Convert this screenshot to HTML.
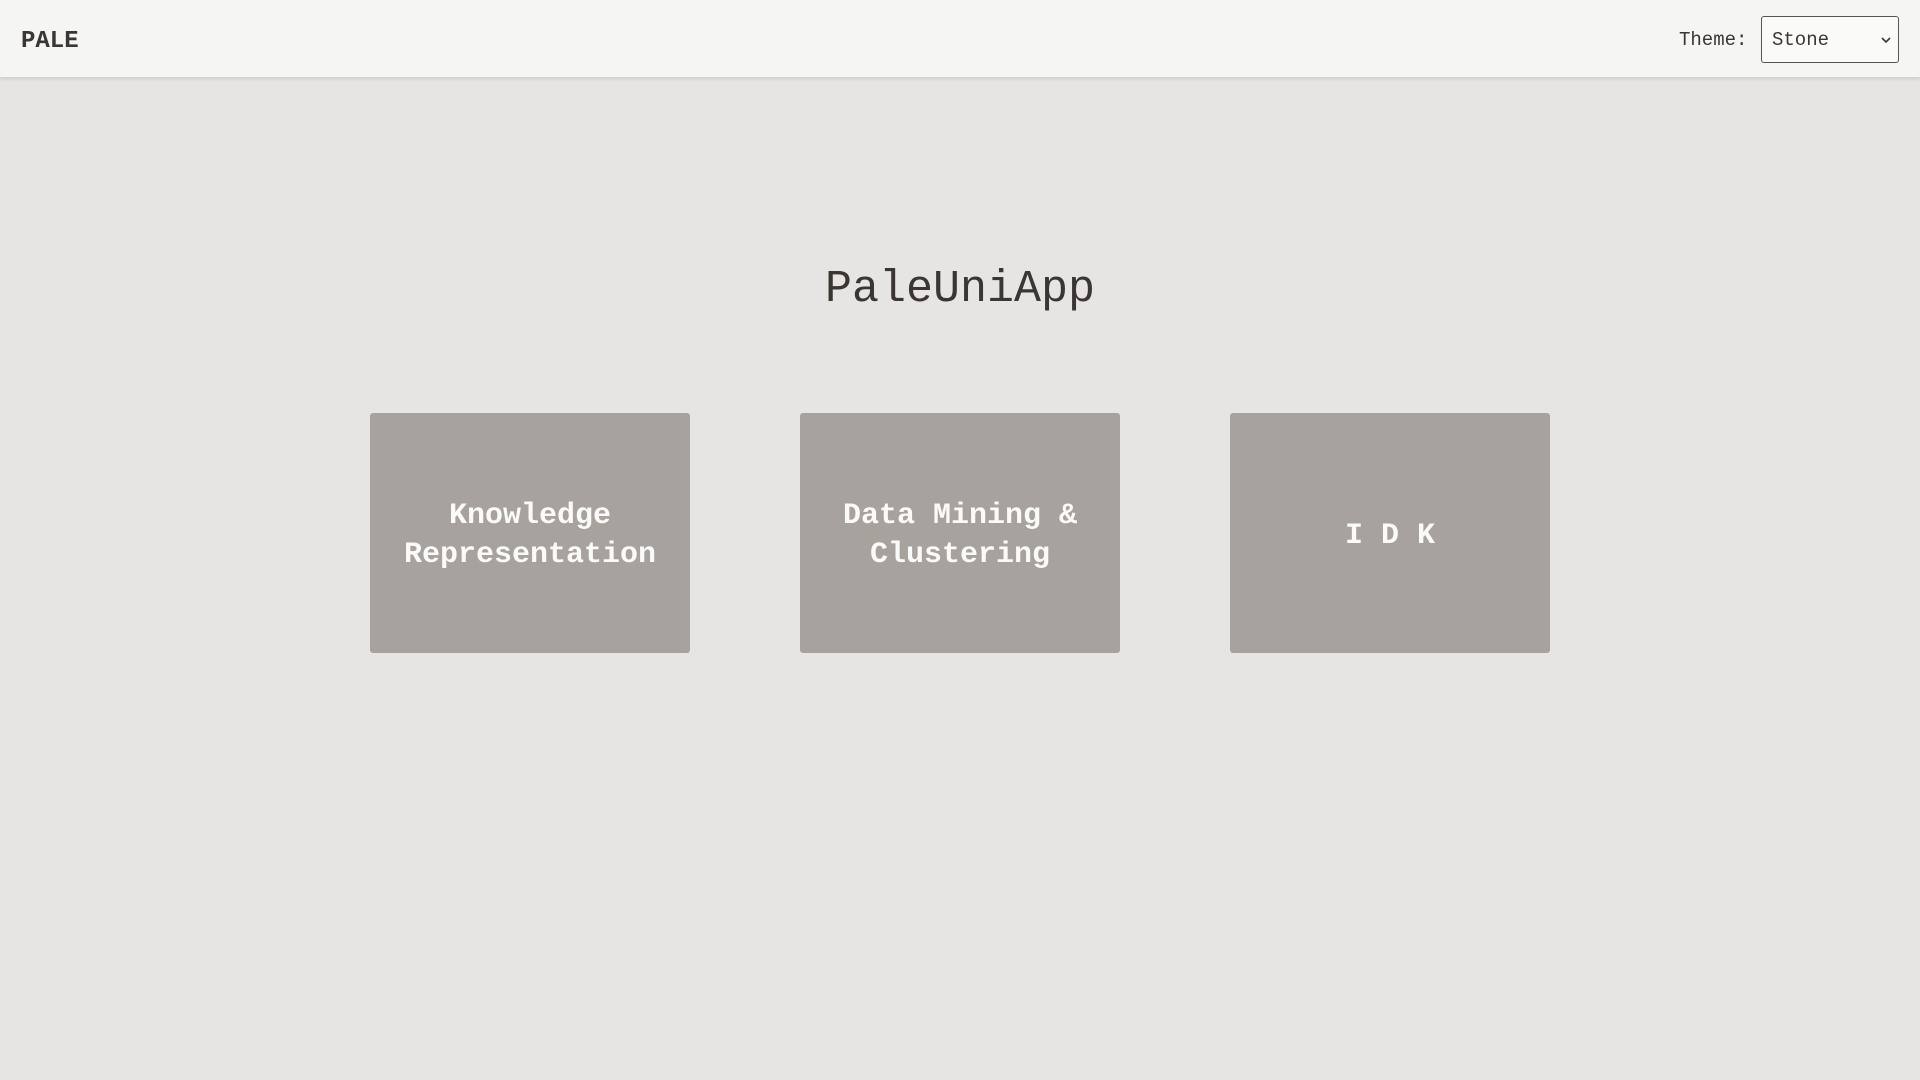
<!DOCTYPE html>
<html><head><meta charset="utf-8"><style>
*{box-sizing:border-box;margin:0;padding:0}
body{width:1920px;height:1080px;background:#e7e5e4;font-family:"Liberation Mono",monospace;color:#3c3633;overflow:hidden}
header{position:absolute;left:0;top:0;width:1920px;height:78px;background:#f5f5f4;border-bottom:1px solid #d6d3d1;box-shadow:0 1px 3px rgba(0,0,0,.12)}
.logo{position:absolute;left:21px;top:28px;font-size:24px;font-weight:bold;color:#3c3633}
.theme{position:absolute;left:1679px;top:29px;font-size:19px;color:#3c3633}
.sel{position:absolute;left:1761px;top:16px;width:138px;height:47px;border:1px solid #57534e;border-radius:3px;background:#fafaf9;font-size:19px;padding:12px 10px;color:#3c3633}
.sel svg{position:absolute;right:6px;top:19px}
h1{position:absolute;left:0;width:1920px;top:264px;text-align:center;font-size:45px;font-weight:normal;color:#3c3633}
.card{position:absolute;top:413px;width:320px;height:240px;background:#a8a29e;border-radius:3px;color:#fafaf9;font-weight:bold;font-size:30px;line-height:39px;display:flex;align-items:center;justify-content:center;text-align:center;padding-top:6px}
</style></head><body>
<header><div class="logo">PALE</div><div class="theme">Theme:</div>
<div class="sel">Stone<svg width="12" height="8" viewBox="0 0 12 8"><path d="M2 2l4 4 4-4" fill="none" stroke="#3c3633" stroke-width="1.6"/></svg></div></header>
<h1>PaleUniApp</h1>
<div class="card" style="left:370px">Knowledge<br>Representation</div>
<div class="card" style="left:800px">Data Mining &amp;<br>Clustering</div>
<div class="card" style="left:1230px">I D K</div>
</body></html>
